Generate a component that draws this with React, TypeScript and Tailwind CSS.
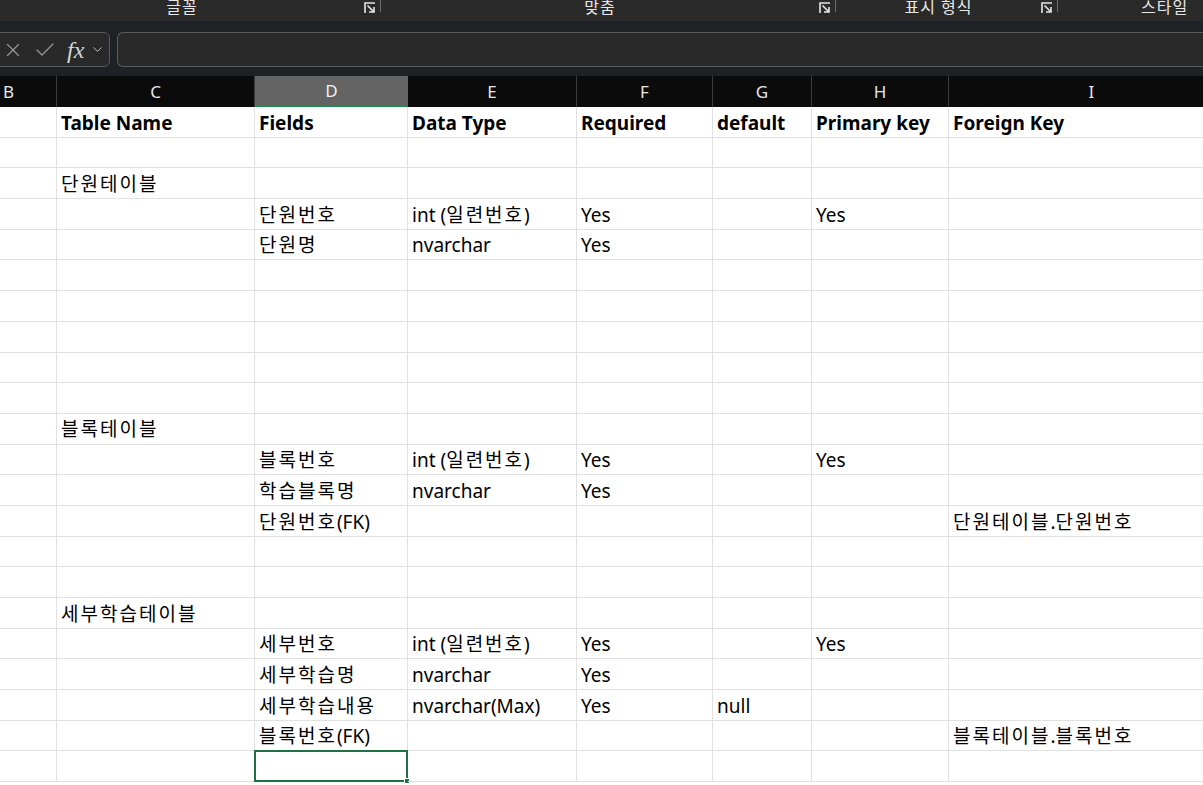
import { X, Check, ChevronDown } from 'lucide-react';

const cols = [
  { key: 'B', w: 'w-[57px]' },
  { key: 'C', w: 'w-[198px]' },
  { key: 'D', w: 'w-[153px]' },
  { key: 'E', w: 'w-[169px]' },
  { key: 'F', w: 'w-[136px]' },
  { key: 'G', w: 'w-[99px]' },
  { key: 'H', w: 'w-[137px]' },
  { key: 'I', w: 'w-[286px]' },
];

type Row = Partial<Record<'C' | 'D' | 'E' | 'F' | 'G' | 'H' | 'I', string>>;

const rows: Row[] = [
  {},
  { C: '단원테이블' },
  { D: '단원번호', E: 'int (일련번호)', F: 'Yes', H: 'Yes' },
  { D: '단원명', E: 'nvarchar', F: 'Yes' },
  {},
  {},
  {},
  {},
  {},
  { C: '블록테이블' },
  { D: '블록번호', E: 'int (일련번호)', F: 'Yes', H: 'Yes' },
  { D: '학습블록명', E: 'nvarchar', F: 'Yes' },
  { D: '단원번호(FK)', I: '단원테이블.단원번호' },
  {},
  {},
  { C: '세부학습테이블' },
  { D: '세부번호', E: 'int (일련번호)', F: 'Yes', H: 'Yes' },
  { D: '세부학습명', E: 'nvarchar', F: 'Yes' },
  { D: '세부학습내용', E: 'nvarchar(Max)', F: 'Yes', G: 'null' },
  { D: '블록번호(FK)', I: '블록테이블.블록번호' },
];

const header: Row = {
  C: 'Table Name',
  D: 'Fields',
  E: 'Data Type',
  F: 'Required',
  G: 'default',
  H: 'Primary key',
  I: 'Foreign Key',
};

// Korean runs get a little extra spacing, like Malgun Gothic in Excel
function CellText({ text }: { text: string }) {
  const parts = text.split(/([가-힣]+)/);
  return (
    <>
      {parts.map((p, i) =>
        /[가-힣]/.test(p) ? (
          <span key={i} className="tracking-[2px]">
            {p}
          </span>
        ) : (
          <span key={i}>{p}</span>
        ),
      )}
    </>
  );
}

function Launcher() {
  return (
    <svg width="12" height="12" viewBox="0 0 12 12" className="text-[#e6e6e6]">
      <path d="M1 11V1h10" fill="none" stroke="currentColor" strokeWidth="1.6" />
      <path d="M3.5 3.5l6 6M5 10h5V5" fill="none" stroke="currentColor" strokeWidth="1.6" />
    </svg>
  );
}

function RibbonGroup({ label, width }: { label: string; width: string }) {
  return (
    <div className={`flex h-full shrink-0 items-start ${width}`}>
      <div className="flex-1 text-center text-[16px] leading-[14px] tracking-[1px] text-[#e8e8e8]">{label}</div>
      <div className="mr-[4px] mt-[2px]">
        <Launcher />
      </div>
      <div className="h-[12px] w-px bg-[#6c6c6c]" />
    </div>
  );
}

export default function App() {
  const font = { fontFamily: '"Noto Sans", "Noto Sans CJK KR", sans-serif' };
  return (
    <div className="h-[785px] w-[1203px] overflow-hidden bg-white" style={font}>
      {/* ribbon group labels */}
      <div className="flex h-[21px] bg-[#2a2a2a]">
        <RibbonGroup label="글꼴" width="w-[381px]" />
        <RibbonGroup label="맞춤" width="w-[455px]" />
        <RibbonGroup label="표시 형식" width="w-[222px]" />
        <div className="flex-1 pl-[83px] text-[16px] leading-[14px] tracking-[1px] text-[#e8e8e8]">스타일</div>
      </div>

      {/* formula bar */}
      <div className="flex h-[55px] items-start gap-[7px] bg-[#1e2126] pt-[11px]">
        <div className="ml-[-10px] flex h-[35px] w-[120px] shrink-0 items-center rounded-[6px] border border-[#5a5a5a] bg-[#292929] pl-[11px]">
          <X size={22} strokeWidth={1.2} className="text-[#9a9a9a]" />
          <Check size={24} strokeWidth={1.2} className="ml-[9px] text-[#9a9a9a]" />
          <span
            className="ml-[10px] text-[24px] italic leading-none text-[#d6d6d6]"
            style={{ fontFamily: '"Liberation Serif", serif' }}
          >
            fx
          </span>
          <ChevronDown size={15} strokeWidth={1.5} className="ml-[6px] text-[#c8c8c8]" />
        </div>
        <div className="h-[35px] flex-1 rounded-l-[6px] border border-r-0 border-[#5a5a5a] bg-[#292929]" />
      </div>

      {/* column headers */}
      <div className="flex h-[31px] bg-[#0b0b0b]">
        {cols.map((c) =>
          c.key === 'D' ? (
            <div
              key={c.key}
              className={`${c.w} flex shrink-0 items-center justify-center border-b-2 border-[#1f8a4d] bg-[#646464] text-[17px] text-[#f0f0f0]`}
            >
              {c.key}
            </div>
          ) : (
            <div
              key={c.key}
              className={`${c.w} flex shrink-0 items-center border-r border-[#3c3c3c] text-[17px] text-[#e6e6e6] ${
                c.key === 'B' ? 'pl-[3px]' : 'justify-center'
              }`}
            >
              {c.key}
            </div>
          ),
        )}
      </div>

      {/* grid */}
      <div className="text-[19px] text-black">
        {[header, ...rows, {}].map((r, i) => (
          <div key={i} className="flex h-[30.7px]">
            {cols.map((c) => {
              const v = c.key === 'B' ? undefined : r[c.key as keyof Row];
              const selected = i === rows.length + 1 && c.key === 'D';
              return (
                <div
                  key={c.key}
                  className={`${c.w} relative flex shrink-0 items-center whitespace-nowrap border-b border-r border-[#e1e1e1] pl-[4px] pt-[2px] ${
                    i === 0 ? 'font-bold' : ''
                  }`}
                >
                  {v && <CellText text={v} />}
                  {selected && (
                    <>
                      <div className="absolute bottom-[-1px] left-[-1px] right-[-1px] top-[-1px] border-2 border-[#1e7145]" />
                      <div className="absolute bottom-[-3px] right-[-3px] h-[6px] w-[6px] border border-white bg-[#1e7145]" />
                    </>
                  )}
                </div>
              );
            })}
          </div>
        ))}
      </div>
    </div>
  );
}
